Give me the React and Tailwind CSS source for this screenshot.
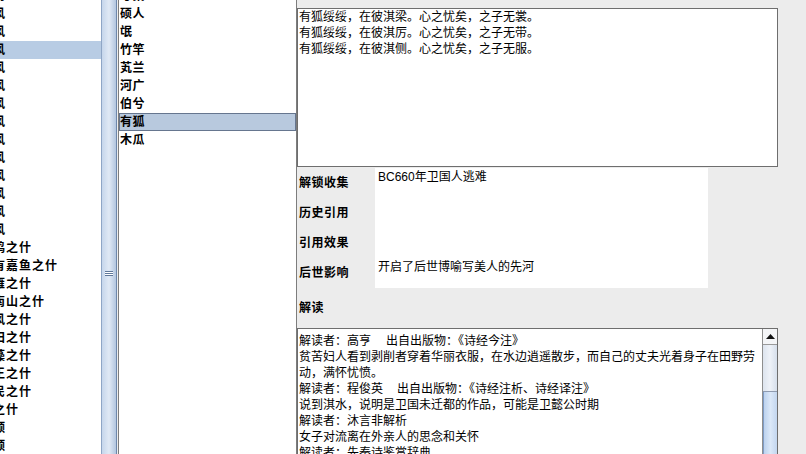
import React from "react";

const leftItems = [
  "召南", "邶风", "鄘风", "卫风", "王风", "郑风", "齐风", "魏风", "唐风", "秦风", "陈风", "桧风", "曹风", "豳风",
  "鹿鸣之什", "南有嘉鱼之什", "鸿雁之什", "节南山之什", "谷风之什", "甫田之什", "鱼藻之什", "文王之什", "生民之什", "荡之什",
  "周颂", "鲁颂", "商颂",
];
const midItems = ["考槃", "硕人", "氓", "竹竿", "芄兰", "河广", "伯兮", "有狐", "木瓜"];

const poem = [
  "有狐绥绥，在彼淇梁。心之忧矣，之子无裳。",
  "有狐绥绥，在彼淇厉。心之忧矣，之子无带。",
  "有狐绥绥，在彼淇侧。心之忧矣，之子无服。",
];

const fields = [
  ["解锁收集", "BC660年卫国人逃难"],
  ["历史引用", ""],
  ["引用效果", ""],
  ["后世影响", "开启了后世博喻写美人的先河"],
];

export default function App() {
  return (
    <div className="w-[806px] h-[454px] overflow-hidden flex bg-[#ececec] text-black font-['Liberation_Sans','Noto_Sans_CJK_SC',sans-serif]">
      {/* left list */}
      <div className="w-[101px] shrink-0 bg-white overflow-hidden">
        <div className="mt-[-13px] ml-[-20px]">
          {leftItems.map((t) => (
            <div
              key={t}
              className={
                "h-[18px] leading-[18px] text-[12px] font-bold tracking-[1px] whitespace-nowrap " +
                (t === "卫风" ? "bg-[#b8cce4]" : "")
              }
            >
              {t}
            </div>
          ))}
        </div>
      </div>
      {/* left scrollbar */}
      <div className="w-[16px] shrink-0 border-l border-r border-l-[#8fa6c6] border-r-[#6d87ab] bg-gradient-to-r from-[#c6d6eb] via-[#e0e9f5] to-[#b3c6df] flex flex-col items-center pt-[271px]">
        <div className="w-[8px] h-px bg-[#5f7799]" />
        <div className="w-[8px] h-px bg-white" />
        <div className="w-[8px] h-px bg-[#5f7799]" />
        <div className="w-[8px] h-px bg-white" />
        <div className="w-[8px] h-px bg-[#5f7799]" />
      </div>
      {/* middle list */}
      <div className="ml-[1px] w-[179px] shrink-0 bg-white border-l border-r border-[#7d7d7d] overflow-hidden">
        <div className="mt-[-13px]">
          {midItems.map((t) => (
            <div
              key={t}
              className={
                "h-[18px] text-[12px] font-bold tracking-[0.5px] whitespace-nowrap " +
                (t === "有狐"
                  ? "bg-[#b8c9de] border border-[#66768f] leading-[16px]"
                  : "leading-[18px] pl-px")
              }
            >
              {t}
            </div>
          ))}
        </div>
      </div>
      {/* right panel */}
      <div className="flex-1 flex flex-col pt-[8px]">
        <div className="w-[481px] h-[159px] shrink-0 bg-white border border-[#6e6e6e] pl-px text-[12px] leading-[16px]">
          {poem.map((l) => (
            <div key={l} className="whitespace-nowrap">{l}</div>
          ))}
        </div>
        <div className="mt-[1px] grid grid-cols-[78px_333px] text-[12px]">
          {fields.map(([k, v]) => (
            <React.Fragment key={k}>
              <div className="h-[30px] flex items-center pl-[2px] font-bold tracking-[0.5px]">{k}</div>
              <div className="h-[30px] bg-white pl-[3px] pt-[2px] leading-[15px] whitespace-nowrap">{v}</div>
            </React.Fragment>
          ))}
        </div>
        <div className="h-[40px] shrink-0 flex items-center pl-[2px] text-[12px] font-bold tracking-[0.5px]">解读</div>
        <div className="w-[481px] flex-1 flex bg-white border border-[#6e6e6e]">
          <div className="flex-1 pl-px pt-[4px] text-[12px] leading-[16px] whitespace-nowrap overflow-hidden">
            <div>解读者：高亨<span className="inline-block w-[15px]" />出自出版物：《诗经今注》</div>
            <div>贫苦妇人看到剥削者穿着华丽衣服，在水边逍遥散步，而自己的丈夫光着身子在田野劳</div>
            <div>动，满怀忧愤。</div>
            <div>解读者：程俊英<span className="inline-block w-[14px]" />出自出版物：《诗经注析、诗经译注》</div>
            <div>说到淇水，说明是卫国未迁都的作品，可能是卫懿公时期</div>
            <div>解读者：沐言非解析</div>
            <div>女子对流离在外亲人的思念和关怀</div>
            <div>解读者：先秦诗鉴赏辞典</div>
          </div>
          <div className="w-[15px] shrink-0 flex flex-col border-l border-[#8e8e8e]">
            <div className="h-[16px] shrink-0 bg-[#f4f5f7] border-b border-[#9a9a9a] flex items-center justify-center">
              <svg width="9" height="5" viewBox="0 0 9 5">
                <path d="M0 5 L4.5 0 L9 5 Z" fill="#111" />
              </svg>
            </div>
            <div className="h-[47px] shrink-0 bg-gradient-to-r from-[#dde4ee] via-[#eef2f8] to-[#d6dfeb] border-b border-[#8f9bb0]" />
            <div className="flex-1 bg-gradient-to-r from-[#bcd2ee] via-[#dbe8f8] to-[#c3d6ef] border-l border-[#7f9cc6]" />
          </div>
        </div>
      </div>
    </div>
  );
}
